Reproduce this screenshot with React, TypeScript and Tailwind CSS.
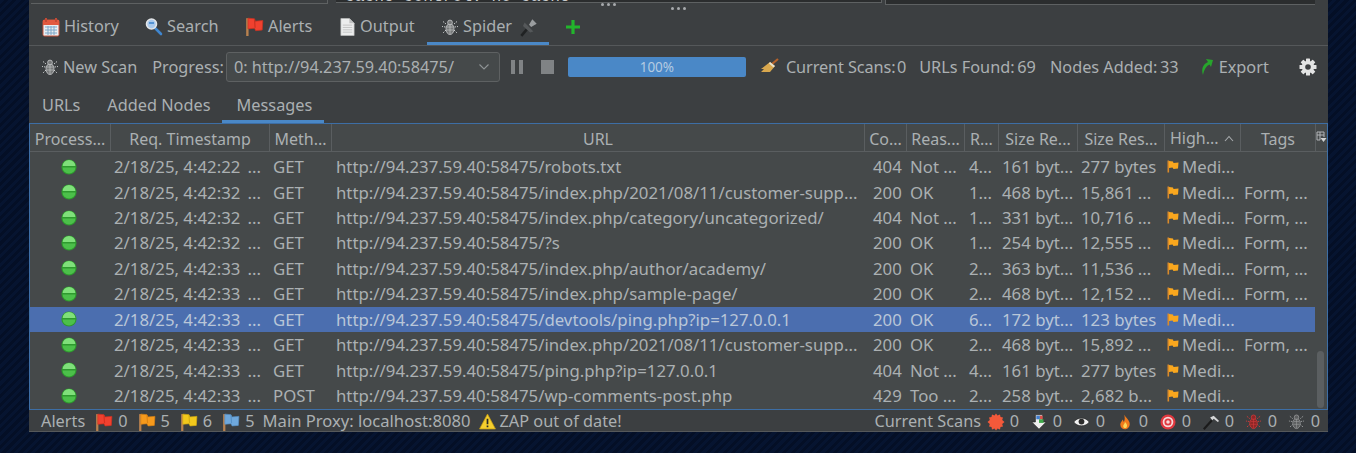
import type { ReactNode } from 'react';

const COLS = 'grid grid-cols-[81px_159px_62px_533px_42px_58px_34px_79px_87px_76px_74px]';

const rows = [
  ['2/18/25, 4:42:22 \u2009...', 'GET', 'http://94.237.59.40:58475/robots.txt', '404', 'Not ...', '4...', '161 byt...', '277 bytes', ''],
  ['2/18/25, 4:42:32 \u2009...', 'GET', 'http://94.237.59.40:58475/index.php/2021/08/11/customer-supp...', '200', 'OK', '1...', '468 byt...', '15,861 ...', 'Form, ...'],
  ['2/18/25, 4:42:32 \u2009...', 'GET', 'http://94.237.59.40:58475/index.php/category/uncategorized/', '404', 'Not ...', '1...', '331 byt...', '10,716 ...', 'Form, ...'],
  ['2/18/25, 4:42:32 \u2009...', 'GET', 'http://94.237.59.40:58475/?s', '200', 'OK', '1...', '254 byt...', '12,555 ...', 'Form, ...'],
  ['2/18/25, 4:42:33 \u2009...', 'GET', 'http://94.237.59.40:58475/index.php/author/academy/', '200', 'OK', '2...', '363 byt...', '11,536 ...', 'Form, ...'],
  ['2/18/25, 4:42:33 \u2009...', 'GET', 'http://94.237.59.40:58475/index.php/sample-page/', '200', 'OK', '2...', '468 byt...', '12,152 ...', 'Form, ...'],
  ['2/18/25, 4:42:33 \u2009...', 'GET', 'http://94.237.59.40:58475/devtools/ping.php?ip=127.0.0.1', '200', 'OK', '6...', '172 byt...', '123 bytes', ''],
  ['2/18/25, 4:42:33 \u2009...', 'GET', 'http://94.237.59.40:58475/index.php/2021/08/11/customer-supp...', '200', 'OK', '2...', '468 byt...', '15,892 ...', 'Form, ...'],
  ['2/18/25, 4:42:33 \u2009...', 'GET', 'http://94.237.59.40:58475/ping.php?ip=127.0.0.1', '404', 'Not ...', '4...', '161 byt...', '277 bytes', ''],
  ['2/18/25, 4:42:33 \u2009...', 'POST', 'http://94.237.59.40:58475/wp-comments-post.php', '429', 'Too ...', '2...', '258 byt...', '2,682 b...', ''],
];

function Flag({ color, dark, size = 18 }: { color: string; dark: string; size?: number }) {
  return (
    <svg width={size} height={size} viewBox="0 0 16 16" className="shrink-0">
      <rect x="1" y="1" width="2" height="15" fill="#b9824f" />
      <path d="M2.5 1 L8 1.5 L8.5 3.5 L15 3 L14.5 11 L9 11.5 L8 9.5 L2.5 10 Z" fill={color} stroke={dark} strokeWidth="0.6" />
      <path d="M8 2 L8.5 9" stroke={dark} strokeWidth="1" />
    </svg>
  );
}

function SmallFlag() {
  return (
    <svg width="12" height="13" viewBox="0 0 12 13" className="shrink-0">
      <rect x="0.5" y="0.5" width="1.6" height="12" fill="#d98a2b" />
      <path d="M2 1 L6 1.5 L6.5 3 L11.5 2.5 L11 8.5 L6.5 9 L5.5 7.5 L2 8 Z" fill="#f9a71e" />
    </svg>
  );
}

function Spider({ color = '#c9cccd', dark = '#77797a', size = 18 }: { color?: string; dark?: string; size?: number }) {
  return (
    <svg width={size} height={size} viewBox="0 0 18 18" className="shrink-0" fill="none">
      <g stroke={color} strokeWidth="1" strokeDasharray="1.5 1">
        <path d="M5 6 L2 3.5 M13 6 L16 3.5 M4.5 9 L1 8.5 M13.5 9 L17 8.5 M5 12 L2 15 M13 12 L16 15" />
      </g>
      <ellipse cx="9" cy="11" rx="4" ry="5.5" fill={dark} stroke={color} strokeWidth="0.8" />
      <circle cx="9" cy="4.5" r="2.4" fill={dark} stroke={color} strokeWidth="0.8" />
      <path d="M9 6 V16 M6 9 H12 M6 12 H12" stroke={color} strokeWidth="0.6" />
    </svg>
  );
}

function Dot() {
  return (
    <svg width="16" height="16" viewBox="0 0 16 16" className="shrink-0">
      <circle cx="8" cy="8" r="7.6" fill="#2e9a2e" />
      <path d="M1.6 7 A6.4 6 0 0 1 14.4 7 Z" fill="#7fe07a" />
      <path d="M1.6 8.5 A6.4 6 0 0 0 14.4 8.5 Z" fill="#4cc04a" />
    </svg>
  );
}

function Gear() {
  return (
    <svg width="18" height="18" viewBox="0 0 18 18" className="shrink-0">
      <g fill="#e3e4e4">
        <rect x="7" y="0.5" width="4" height="17" rx="0.6" />
        <rect x="7" y="0.5" width="4" height="17" rx="0.6" transform="rotate(45 9 9)" />
        <rect x="7" y="0.5" width="4" height="17" rx="0.6" transform="rotate(90 9 9)" />
        <rect x="7" y="0.5" width="4" height="17" rx="0.6" transform="rotate(135 9 9)" />
        <circle cx="9" cy="9" r="6.2" />
      </g>
      <circle cx="9" cy="9" r="2.8" fill="#3c3f41" />
    </svg>
  );
}

function Dots({ className }: { className: string }) {
  return (
    <div className={`absolute flex gap-[3px] ${className}`}>
      <span className="size-[3px] rounded-full bg-[#a8abad]" />
      <span className="size-[3px] rounded-full bg-[#a8abad]" />
      <span className="size-[3px] rounded-full bg-[#a8abad]" />
    </div>
  );
}

function Tab({ icon, label, extra, active, className }: { icon: ReactNode; label: string; extra?: ReactNode; active?: boolean; className: string }) {
  return (
    <div className={`flex h-full items-center gap-[4px] pt-[4px] border-b-[3px] ${active ? 'border-[#4a88c7]' : 'border-transparent'} ${className}`}>
      {icon}
      <span>{label}</span>
      {extra}
    </div>
  );
}

function Count({ icon, n, className = '' }: { icon: ReactNode; n: number; className?: string }) {
  return (
    <div className={`flex items-center gap-[5px] ${className}`}>
      {icon}
      <span>{n}</span>
    </div>
  );
}

// fixed pitch for the scan counters on the right of the status bar
function ScanCount({ icon, width = 'w-[43px]', gap = 'gap-[5px]' }: { icon: ReactNode; width?: string; gap?: string }) {
  return (
    <div className={`flex items-center justify-end shrink-0 ${width} ${gap}`}>
      {icon}
      <span>0</span>
    </div>
  );
}

export default function App() {
  return (
    <div className="w-[1356px] h-[453px] overflow-hidden bg-[#06122a] bg-[repeating-linear-gradient(135deg,#061430_0px,#061430_3px,#040f26_3px,#040f26_6px)] pl-[29px] pr-[28px] font-['Noto_Sans',sans-serif] text-[16.3px] text-[#abb0b2]">
      <div className="relative h-[432px] bg-[#3c3f41] flex flex-col">
        {/* panes above, cut off by the screenshot */}
        <div className="h-[5px] flex">
          <div className="ml-[2px] w-[297px] h-[4px] border-b border-r border-[#5e6162]" />
          <div className="ml-[8px] w-[546px] h-[3px] bg-[#2b2d2e] border-b border-r border-[#5e6162] overflow-hidden relative">
            <div className="absolute -top-[11px] left-[9px] font-['Liberation_Mono',monospace] text-[#c9cccd] text-[16.3px] leading-[15px] whitespace-nowrap">cache-control: no-cache</div>
          </div>
          <div className="ml-[3px] w-[430px] h-[5px] bg-[#2b2d2e] border-b border-l border-[#5e6162]" />
        </div>
        <Dots className="left-[572px] top-[3px]" />
        <Dots className="left-[642px] top-[7px]" />

        {/* main tabs */}
        <div className="h-[41px] flex items-stretch border-b border-[#55585a] pt-[2px]">
          <Tab
            className="ml-[13px] w-[91px]"
            label="History"
            icon={
              <svg width="18" height="20" viewBox="0 0 18 20">
                <rect x="1" y="3" width="16" height="16" rx="1.5" fill="#e9eef2" stroke="#c9573f" />
                <rect x="1" y="3" width="16" height="5" fill="#e2593f" />
                <path d="M4 1 V5 M14 1 V5" stroke="#c24a35" strokeWidth="2" />
                <path d="M3 10 H15 M3 13 H15 M3 16 H15 M6 9 V18 M9 9 V18 M12 9 V18" stroke="#7ea8c9" strokeWidth="1" />
              </svg>
            }
          />
          <Tab
            className="ml-[12px] w-[83px]"
            label="Search"
            icon={
              <svg width="18" height="20" viewBox="0 0 18 20">
                <path d="M9 10 L16 17" stroke="#3f86cf" strokeWidth="2.6" strokeLinecap="round" />
                <circle cx="6.5" cy="7" r="5" fill="#a9c9ec" stroke="#e4e6e8" strokeWidth="1.6" />
                <path d="M4 6 H9" stroke="#3f86cf" strokeWidth="1.6" />
              </svg>
            }
          />
          <Tab className="ml-[17px] w-[84px]" label="Alerts" icon={<Flag color="#f0412f" dark="#c93121" size={19} />} />
          <Tab
            className="ml-[10px] w-[76px]"
            label="Output"
            icon={
              <svg width="17" height="20" viewBox="0 0 18 20">
                <path d="M2 1 H11 L16 6 V19 H2 Z" fill="#eceded" stroke="#bcbdbd" strokeWidth="0.7" />
                <path d="M11 1 V6 H16 Z" fill="#bfc0c0" />
                <path d="M4 8 H14 M4 10.5 H14 M4 13 H14 M4 15.5 H14" stroke="#c2c3c3" strokeWidth="1" />
              </svg>
            }
          />
          <Tab
            active
            className="ml-[12px] w-[122px] pl-[14px]"
            label="Spider"
            icon={<Spider />}
            extra={
              <svg width="22" height="22" viewBox="0 0 20 20" className="ml-[2px]">
                <path d="M3 18 L9 11" stroke="#202223" strokeWidth="2.4" />
                <path d="M6 6 L14 14 L11 15 L4.5 9 Z" fill="#55585a" />
                <path d="M10 8 L13 3 L17 7 L12 10 Z" fill="#9a9d9f" />
              </svg>
            }
          />
          <div className="ml-[15px] flex items-center pt-[1px]">
            <svg width="18" height="18" viewBox="0 0 18 18">
              <path d="M9 2 V16 M2 9 H16" stroke="#22b52c" strokeWidth="3.2" />
            </svg>
          </div>
        </div>

        {/* toolbar */}
        <div className="h-[46px] flex items-center pb-[4px]">
          <div className="ml-[12px]"><Spider /></div>
          <span className="ml-[4px]">New Scan</span>
          <span className="ml-[15px]">Progress:</span>
          <div className="ml-[2px] w-[274px] h-[30px] rounded-[3px] border border-[#5e6162] bg-[#45494a] flex items-center pl-[7px] pr-[9px] justify-between">
            <span>0: http://94.237.59.40:58475/</span>
            <svg width="12" height="8" viewBox="0 0 12 8" fill="none">
              <path d="M1.5 1.5 L6 6 L10.5 1.5" stroke="#8f9496" strokeWidth="1.1" />
            </svg>
          </div>
          <div className="ml-[11px] flex gap-[4px]">
            <span className="w-[4px] h-[14px] bg-[#808385]" />
            <span className="w-[4px] h-[14px] bg-[#808385]" />
          </div>
          <span className="ml-[18px] w-[13px] h-[14px] bg-[#808385]" />
          <div className="ml-[14px] w-[178px] h-[20px] rounded-[2px] bg-[#4a88c7] flex items-center justify-center text-[13.5px] text-[#b4cbe2]">100%</div>
          <svg width="20" height="20" viewBox="0 0 20 20" className="ml-[14px]">
            <path d="M12 7 L18 2" stroke="#b5622a" strokeWidth="2.2" />
            <path d="M10 5 L15 9 L10 15 L1 15 L4 12 L1 12 Z" fill="#d9a84e" />
            <path d="M10 5 L15 9 L13.5 10.5 L9 6.5 Z" fill="#e8e2cf" />
          </svg>
          <span className="ml-[6px] tracking-[-0.1px]">Current Scans:&#8202;0</span>
          <span className="ml-[13px]">URLs Found:&#8201;69</span>
          <span className="ml-[14px]">Nodes Added:&#8201;33</span>
          <svg width="16" height="20" viewBox="0 0 16 20" className="ml-[20px]">
            <path d="M4 18 C2 12 4 7 9 5 L7 2 L14 3 L12 10 L10.5 7.5 C7 9 5 13 4 18 Z" fill="#27a52c" />
          </svg>
          <span className="ml-[4px]">Export</span>
          <div className="ml-[30px]"><Gear /></div>
        </div>

        {/* sub tabs */}
        <div className="h-[31px] flex items-stretch">
          <div className="ml-[13px] pb-[4px] flex items-center">URLs</div>
          <div className="ml-[27px] pb-[4px] flex items-center">Added Nodes</div>
          <div className="ml-[12px] w-[102px] pb-[1px] pl-[2px] flex items-center justify-center border-b-[3px] border-[#4a88c7]">Messages</div>
        </div>

        {/* table */}
        <div className="h-[287px] flex flex-col border border-[#3d6ea5] bg-[#45494a] relative">
          <div className="h-[28px] flex border-b border-[#5a5e60] shrink-0 text-[16px]">
            <div className={`${COLS} w-[1285px] text-center items-center`}>
              {['Process...', 'Req. Timestamp', 'Meth...', 'URL', 'Co...', 'Reas...', 'R...', 'Size Re...', 'Size Res...'].map((h) => (
                <div key={h} className="h-[28px] leading-[30px] border-r border-[#5a5e60] whitespace-nowrap overflow-hidden">{h}</div>
              ))}
              <div className="h-[28px] leading-[30px] border-r border-[#5a5e60] flex items-center justify-between pl-[5px] pr-[6px]">
                <span>High...</span>
                <svg width="10" height="7" viewBox="0 0 10 7" fill="none"><path d="M1 6 L5 1.5 L9 6" stroke="#a9adaf" strokeWidth="1.1" /></svg>
              </div>
              <div className="h-[28px] leading-[30px]">Tags</div>
            </div>
            <div className="w-[12px] flex items-center justify-center border-l border-[#5a5e60]">
              <svg width="11" height="13" viewBox="0 0 11 13" fill="none">
                <path d="M1 1 H8 V6 M1 1 V9 H4 M1 4 H8 M4 1 V9" stroke="#b3b6b8" strokeWidth="1" />
                <path d="M4.5 7 H10.5 L7.5 11 Z" fill="#d0d2d3" />
              </svg>
            </div>
          </div>
          <div className="flex flex-1 min-h-0">
            <div className="w-[1285px] pt-[2px] text-[16.8px]">
              {rows.map((r, i) => (
                <div key={i} className={`${COLS} h-[25.45px] items-center whitespace-nowrap ${i === 6 ? 'bg-[#4b6eaf] text-[#b9c6d8]' : ''}`}>
                  <div className="flex justify-center pr-[3px]"><Dot /></div>
                  <div className="pl-[3px]">{r[0]}</div>
                  <div className="pl-[3px]">{r[1]}</div>
                  <div className="pl-[4px]">{r[2]}</div>
                  <div className="pl-[8px]">{r[3]}</div>
                  <div className="pl-[3px]">{r[4]}</div>
                  <div className="pl-[4px]">{r[5]}</div>
                  <div className="pl-[3px]">{r[6]}</div>
                  <div className="pl-[3px]">{r[7]}</div>
                  <div className="pl-[2px] flex items-center gap-[3px]"><SmallFlag /><span>Medi...</span></div>
                  <div className="pl-[3px]">{r[8]}</div>
                </div>
              ))}
            </div>
            <div className="w-[12px] relative">
              <div className="absolute left-[2px] bottom-[1px] w-[7px] h-[57px] rounded-[4px] bg-[#5b5f61]" />
            </div>
          </div>
        </div>

        {/* status bar */}
        <div className="h-[22px] flex items-center border-b border-[#55585a] pl-[12px] pr-[8px] pt-[2px]">
          <span>Alerts</span>
          <Count className="ml-[10px]" n={0} icon={<Flag color="#f0412f" dark="#d8301f" />} />
          <Count className="ml-[10px]" n={5} icon={<Flag color="#f79a1c" dark="#dd8312" />} />
          <Count className="ml-[10px]" n={6} icon={<Flag color="#f2c81c" dark="#d6ad10" />} />
          <Count className="ml-[10px]" n={5} icon={<Flag color="#6fa8dc" dark="#5690c6" />} />
          <span className="ml-[8px] text-[16.6px]">Main Proxy: localhost:8080</span>
          <svg width="17" height="17" viewBox="0 0 16 16" className="ml-[8px]">
            <path d="M8 1 L15.5 15 H0.5 Z" fill="#f6cf2e" stroke="#c99f12" strokeWidth="0.7" />
            <path d="M8 5.5 V10.5 M8 11.8 V13.5" stroke="#2a2a2a" strokeWidth="1.6" />
          </svg>
          <span className="ml-[4px]">ZAP out of date!</span>
          <span className="ml-auto">Current Scans</span>
          <ScanCount width="w-[38px]" icon={
            <svg width="18" height="18" viewBox="0 0 18 18">
              <path d="M9 0.5 L10.5 2.5 L13 1.5 L13.5 4 L16 4.5 L15.2 7 L17.5 9 L15.2 11 L16 13.5 L13.5 14 L13 16.5 L10.5 15.5 L9 17.5 L7.5 15.5 L5 16.5 L4.5 14 L2 13.5 L2.8 11 L0.5 9 L2.8 7 L2 4.5 L4.5 4 L5 1.5 L7.5 2.5 Z" fill="#f4593a" />
            </svg>
          } />
          <ScanCount icon={
            <svg width="18" height="18" viewBox="0 0 20 18">
              <path d="M2 9 H6 V1 H14 V9 H18 L10 17 Z" fill="#eeeeee" stroke="#222" strokeWidth="0.7" />
              <rect x="7" y="2" width="4" height="4" fill="#3f7fd0" />
              <rect x="11" y="2" width="3" height="4" fill="#d9504a" />
              <rect x="10" y="6" width="5" height="4" fill="#3fa84a" />
            </svg>
          } />
          <ScanCount gap="gap-[6px]" icon={
            <svg width="17" height="12" viewBox="0 0 20 14">
              <path d="M1 7 C5 1 15 1 19 7 C15 13 5 13 1 7 Z" fill="#f2f2f2" stroke="#222" strokeWidth="0.7" />
              <circle cx="10" cy="6.5" r="3.4" fill="#2b2b2b" />
            </svg>
          } />
          <ScanCount gap="gap-[8px]" icon={
            <svg width="12" height="18" viewBox="0 0 14 18">
              <path d="M6 0.5 C8 4 13 7 12.5 12 C12 16 9 17.5 7 17.5 C4 17.5 1.5 15.5 1.5 12 C1.5 9 4 8 4 6 C5 7 5.5 8 5.5 9 C7 7 7 3.5 6 0.5 Z" fill="#f07a1c" />
              <path d="M7 9 C9 11 10 13 9 15 C8 16.5 5.5 16.5 5 14.5 C4.5 12.5 6.5 11.5 7 9 Z" fill="#fcd75a" />
            </svg>
          } />
          <ScanCount gap="gap-[6px]" icon={
            <svg width="16" height="16" viewBox="0 0 18 18">
              <circle cx="9" cy="9" r="8.5" fill="#e0383f" />
              <circle cx="9" cy="9" r="6" fill="#f5d9d9" />
              <circle cx="9" cy="9" r="4" fill="#e0383f" />
              <circle cx="9" cy="9" r="2" fill="#f5d9d9" />
            </svg>
          } />
          <ScanCount icon={
            <svg width="18" height="18" viewBox="0 0 20 20">
              <path d="M2 18 L11 8" stroke="#1b1b1b" strokeWidth="2.4" />
              <path d="M9 5 L13 3 L19 9 L17.5 10 L13 6.5 L11.5 8 Z" fill="#d5d6d7" />
            </svg>
          } />
          <ScanCount gap="gap-[6px]" icon={<Spider color="#d13a3a" dark="#8e2727" size={17} />} />
          <ScanCount gap="gap-[6px]" icon={<Spider color="#9a9c9d" dark="#5c5e5f" size={17} />} />
        </div>
      </div>
    </div>
  );
}
